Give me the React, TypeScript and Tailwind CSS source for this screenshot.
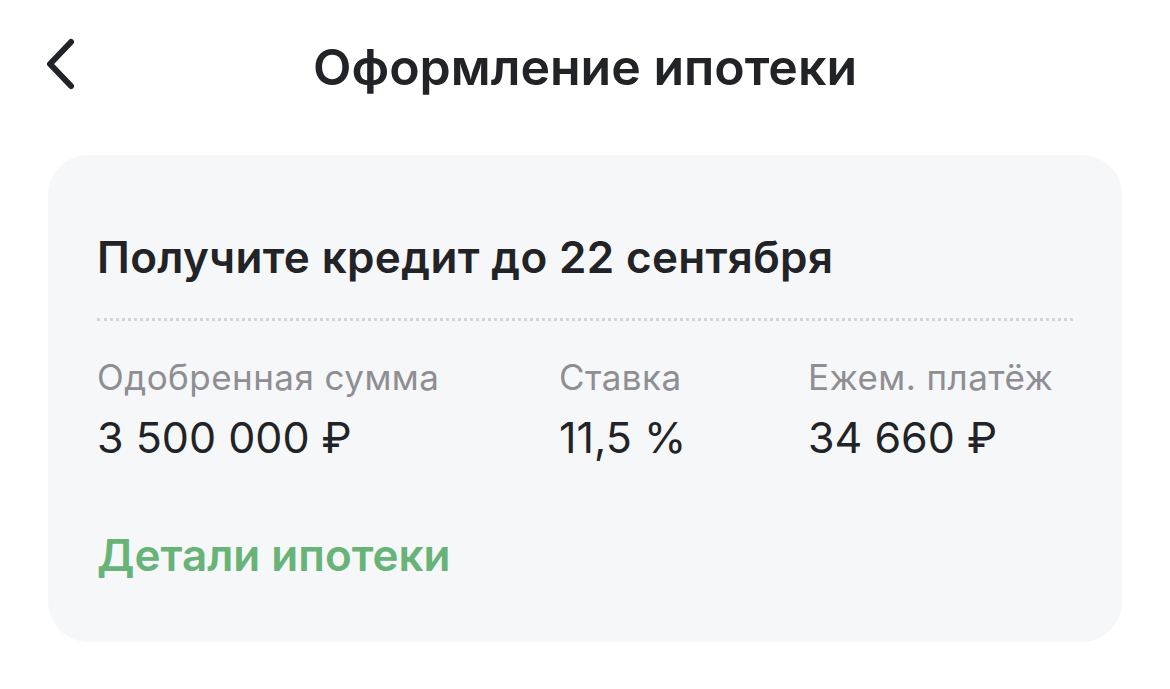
export default function App() {
  const stats = [
    { label: "Одобренная сумма", value: "3 500 000 ₽", w: "w-[462px]" },
    { label: "Ставка", value: "11,5 %", w: "w-[249px]" },
    { label: "Ежем. платёж", value: "34 660 ₽", w: "" },
  ];

  return (
    <div className="w-[1170px] h-[689px] bg-white font-['Inter',sans-serif] text-[#222326] overflow-hidden">
      {/* Header */}
      <header className="relative h-[140px] flex items-start justify-center pt-[37px]">
        <button className="absolute left-[36px] top-[37px] w-[44px] h-[56px] flex items-center justify-center">
          <svg width="36" height="56" viewBox="0 0 36 56" fill="none">
            <path d="M31 5 L10 27 L31 49" stroke="#222326" strokeWidth="6" strokeLinecap="round" strokeLinejoin="round" />
          </svg>
        </button>
        <h1 className="text-[50px] font-semibold leading-[60px]">Оформление ипотеки</h1>
      </header>

      {/* Card */}
      <section className="mx-[48px] mt-[15px] h-[487px] bg-[#f6f7f9] rounded-[40px] px-[49px] pt-[76px]">
        <h2 className="text-[44px] font-semibold leading-[52px] tracking-[0.35px]">Получите кредит до 22 сентября</h2>
        <div className="mt-[35px] border-t-[3px] border-dotted border-[#d3d4d6]" />
        <div className="flex mt-[35px]">
          {stats.map((s) => (
            <div key={s.label} className={s.w}>
              <div className="text-[35px] leading-[42px] text-[#8e8e93] tracking-[0.45px]">{s.label}</div>
              <div className="text-[43px] leading-[52px] mt-[13px]">{s.value}</div>
            </div>
          ))}
        </div>
        <div className="mt-[66px] text-[44px] font-semibold leading-[52px] text-[#67b378]">Детали ипотеки</div>
      </section>
    </div>
  );
}
